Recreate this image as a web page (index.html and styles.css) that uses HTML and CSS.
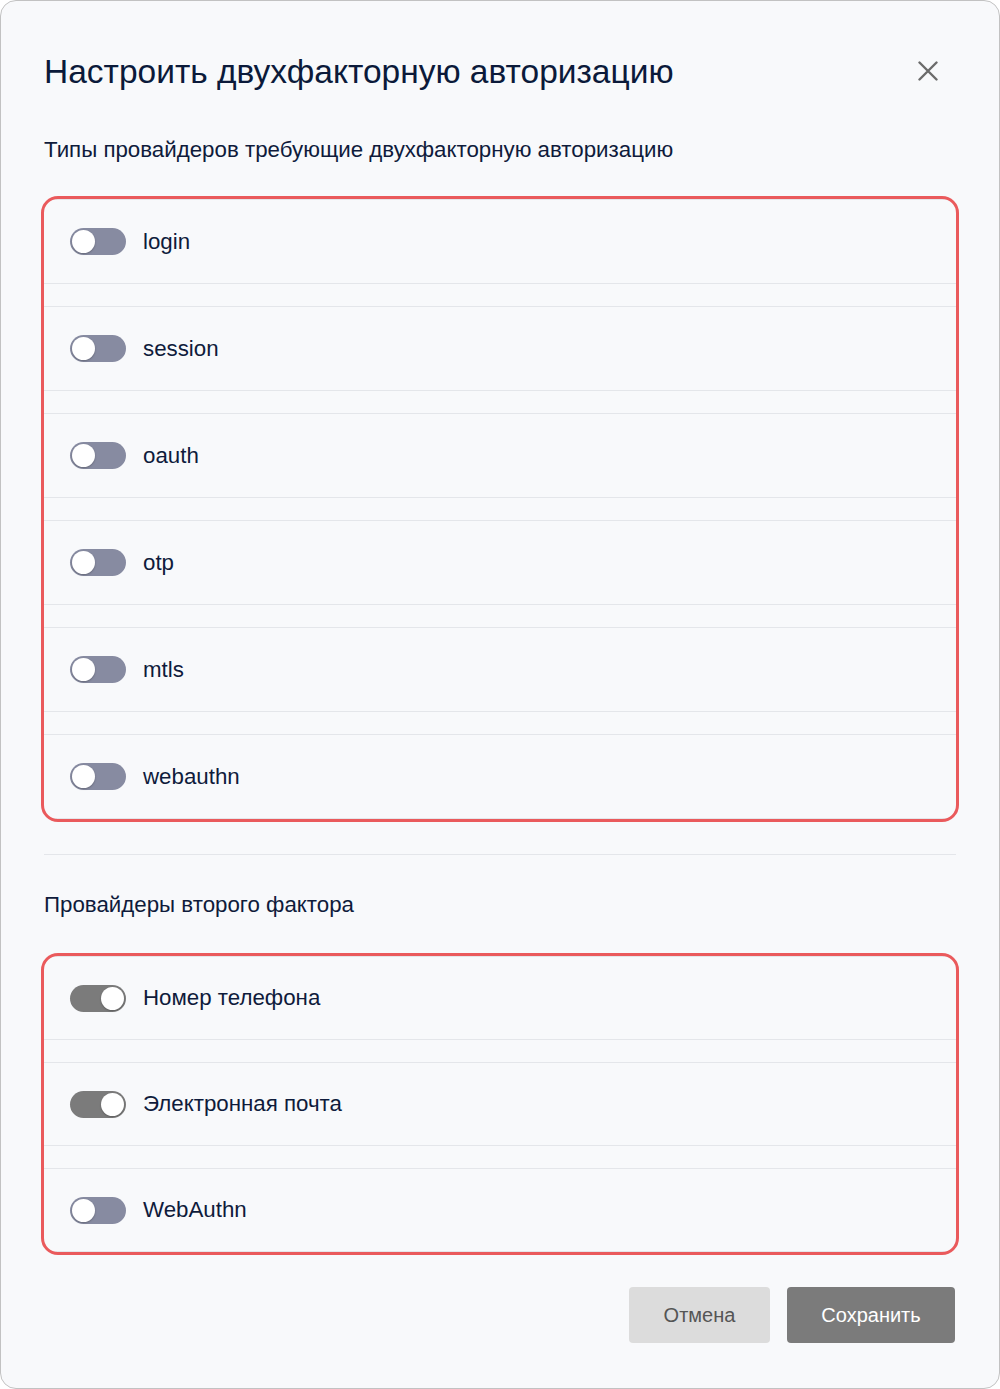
FILE: index.html
```html
<!DOCTYPE html>
<html lang="ru">
<head>
<meta charset="utf-8">
<title>Настроить двухфакторную авторизацию</title>
<link rel="stylesheet" href="styles.css">
</head>
<body>
<div class="dialog">
  <div class="header">
    <h1 class="title">Настроить двухфакторную авторизацию</h1>
    <button class="close" aria-label="Закрыть">
      <svg width="20" height="20" viewBox="0 0 20 20"><path d="M1.5 1.5 L18.5 18.5 M18.5 1.5 L1.5 18.5" stroke="#6b6b6b" stroke-width="2.4" stroke-linecap="round" fill="none"/></svg>
    </button>
  </div>

  <h2 class="section-title">Типы провайдеров требующие двухфакторную авторизацию</h2>
  <div class="list list-first">
    <div class="item"><span class="toggle"><span class="knob"></span></span><span class="label">login</span></div>
    <div class="item"><span class="toggle"><span class="knob"></span></span><span class="label">session</span></div>
    <div class="item"><span class="toggle"><span class="knob"></span></span><span class="label">oauth</span></div>
    <div class="item"><span class="toggle"><span class="knob"></span></span><span class="label">otp</span></div>
    <div class="item"><span class="toggle"><span class="knob"></span></span><span class="label">mtls</span></div>
    <div class="item"><span class="toggle"><span class="knob"></span></span><span class="label">webauthn</span></div>
  </div>

  <div class="divider"></div>

  <h2 class="section-title section-second">Провайдеры второго фактора</h2>
  <div class="list list-second">
    <div class="item"><span class="toggle on"><span class="knob"></span></span><span class="label">Номер телефона</span></div>
    <div class="item"><span class="toggle on"><span class="knob"></span></span><span class="label">Электронная почта</span></div>
    <div class="item"><span class="toggle"><span class="knob"></span></span><span class="label">WebAuthn</span></div>
  </div>

  <div class="footer">
    <button class="btn btn-cancel">Отмена</button>
    <button class="btn btn-save">Сохранить</button>
  </div>
</div>
</body>
</html>
```
FILE: styles.css
```css
* { box-sizing: border-box; }
html, body { margin: 0; padding: 0; background: #ffffff; }
body { font-family: "Liberation Sans", Arial, sans-serif; color: #0f1b3b; }

.dialog {
  width: 1000px;
  height: 1389px;
  background: #f8f9fb;
  border: 1px solid #c2c2c2;
  border-radius: 16px;
  padding: 51px 43px 0 43px;
}

.header {
  display: flex;
  justify-content: space-between;
  align-items: flex-start;
}

.title {
  margin: 0;
  font-size: 33.5px;
  line-height: 40px;
  font-weight: 400;
  color: #0b1a3a;
}

.close {
  border: 0;
  background: transparent;
  padding: 0;
  width: 20px;
  height: 20px;
  margin-top: 9px;
  margin-right: 18px;
  display: flex;
}

.section-title {
  margin: 45px 0 0 0;
  font-size: 22.3px;
  line-height: 26px;
  font-weight: 400;
  color: #0f1b3b;
}

.section-second { margin-top: 37px; }

.list {
  outline: 3px solid #ea5a5c;
  border-radius: 14px;
  display: flex;
  flex-direction: column;
  gap: 22px;
  overflow: hidden;
}

.list-first { margin-top: 36px; }
.list-second { margin-top: 38px; }

.item {
  height: 85px;
  border-top: 1px solid #e4e6ea;
  border-bottom: 1px solid #e4e6ea;
  display: flex;
  align-items: center;
  padding-left: 26px;
  gap: 17px;
}

.list-second .item { height: 84px; }

.toggle {
  width: 56px;
  height: 27px;
  border-radius: 14px;
  background: #878ba1;
  position: relative;
  flex: none;
}

.toggle .knob {
  position: absolute;
  top: 2px;
  left: 2px;
  width: 23px;
  height: 23px;
  border-radius: 50%;
  background: #ffffff;
  box-shadow: 0 1px 2px rgba(0,0,0,0.25);
}

.toggle.on { background: #7b7b7b; }
.toggle.on .knob { left: 31px; }

.label {
  font-size: 22.3px;
  line-height: 26px;
  color: #0f1b3b;
}

.divider {
  height: 1px;
  background: #e4e6ea;
  margin-top: 35px;
}

.footer {
  display: flex;
  justify-content: flex-end;
  gap: 17px;
  margin-top: 35px;
  margin-right: 1px;
}

.btn {
  height: 56px;
  border: 0;
  border-radius: 4px;
  font-family: "Liberation Sans", Arial, sans-serif;
  font-size: 20px;
  padding: 0;
}

.btn-cancel { background: #dcdcdc; color: #555555; width: 141px; }
.btn-save { background: #7b7b7b; color: #ffffff; width: 168px; }
```
